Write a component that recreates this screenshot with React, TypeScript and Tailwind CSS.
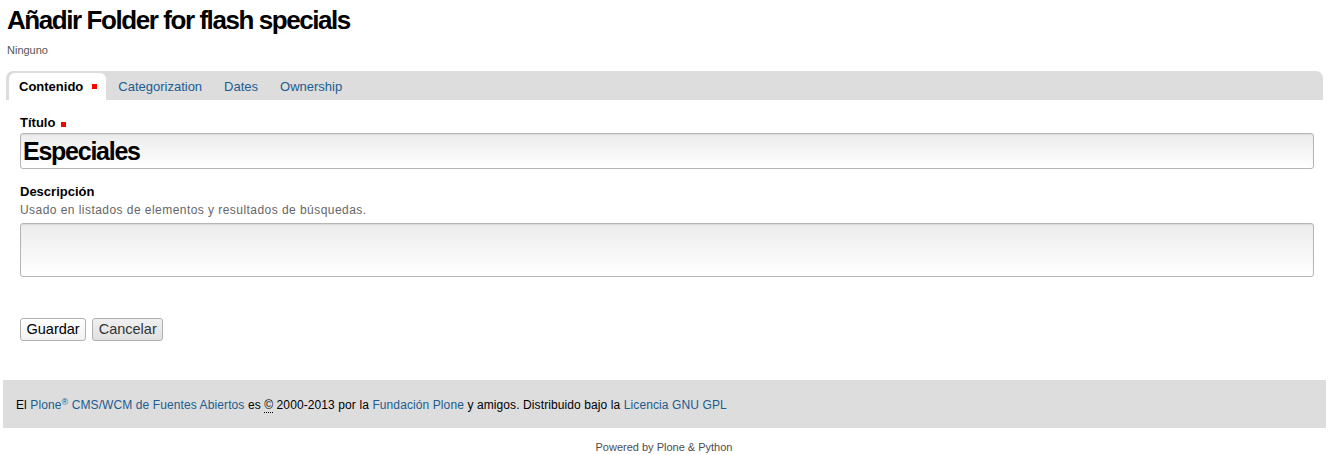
import React from "react";

const tabs = ["Categorization", "Dates", "Ownership"];

function Required({ gap }: { gap: string }) {
  return <span className={`inline-block w-[5px] h-[5px] bg-[#ff0000] align-baseline ${gap}`} />;
}

export default function App() {
  return (
    <div className="min-h-screen bg-white text-black font-['Liberation_Sans',Arial,sans-serif]">
      {/* Page heading */}
      <div className="pl-[7px] pt-[5px]">
        <h1 className="text-[26px] leading-[31px] font-bold tracking-[-0.055em]">
          Añadir Folder for flash specials
        </h1>
        <p className="mt-[7px] text-[11px] leading-[14px] text-[#555]">Ninguno</p>
      </div>

      {/* Edit form */}
      <div className="mt-[14px] ml-[6px] mr-[11px]">
        <div className="h-[29px] bg-[#dddddd] rounded-t-[7px] flex items-end pl-[3px]">
          <div className="h-[27px] bg-white rounded-t-[6px] flex items-center pl-[10px] pr-[9px] text-[13px] font-bold">
            Contenido
            <Required gap="ml-[9px]" />
          </div>
          <div className="flex h-[27px] items-center ml-[1px]">
            {tabs.map((t) => (
              <a key={t} href="#" className="px-[11px] text-[13px] text-[#205c90]">
                {t}
              </a>
            ))}
          </div>
        </div>

        <div className="pl-[14px] pr-[9px]">
          <div className="mt-[15px]">
            <label className="block text-[13px] leading-[16px] font-bold">
              Título
              <Required gap="ml-[6px]" />
            </label>
            <div className="mt-[2px] h-[36px] border border-[#b5b5b5] rounded-[3px] bg-gradient-to-b from-[#ececec] to-white shadow-[inset_0_1px_1px_rgba(0,0,0,0.08)] flex items-center pl-[2px]">
              <span className="text-[25px] font-bold tracking-[-0.05em] leading-none">Especiales</span>
            </div>
          </div>

          <div className="mt-[15px]">
            <label className="block text-[13px] leading-[16px] font-bold">Descripción</label>
            <p className="mt-[3px] text-[12px] leading-[15px] tracking-[0.45px] text-[#666]">
              Usado en listados de elementos y resultados de búsquedas.
            </p>
            <div className="mt-[5px] h-[54px] border border-[#b5b5b5] rounded-[3px] bg-gradient-to-b from-[#ececec] to-white shadow-[inset_0_1px_1px_rgba(0,0,0,0.08)]" />
          </div>

          <div className="mt-[41px] flex gap-[6px]">
            <button className="h-[23px] px-[5.5px] border border-[#b0b0b0] rounded-[3px] bg-gradient-to-b from-white to-[#f1f1f1] text-[14.5px] text-black">
              Guardar
            </button>
            <button className="h-[23px] px-[5.5px] border border-[#b0b0b0] rounded-[3px] bg-gradient-to-b from-[#f0f0f0] to-[#e0e0e0] text-[14.5px] text-[#333]">
              Cancelar
            </button>
          </div>
        </div>
      </div>

      {/* Footer */}
      <div className="mt-[39px] ml-[3px] mr-[8px] h-[48px] bg-[#dddddd] flex items-center pl-[13px] pt-[2px] text-[12px] tracking-[0.1px] text-black">
        <span>
          El <a href="#" className="text-[#205c90]">Plone<sup className="text-[9px]">®</sup> CMS/WCM de Fuentes Abiertos</a> es{" "}
          <abbr title="Copyright" className="no-underline border-b border-dotted border-black">©</abbr> 2000-2013 por la{" "}
          <a href="#" className="text-[#205c90]">Fundación Plone</a> y amigos. Distribuido bajo la{" "}
          <a href="#" className="text-[#205c90]">Licencia GNU GPL</a>
        </span>
      </div>
      <p className="mt-[11px] text-center text-[11px] text-[#4d4d4d] pr-[6px]">Powered by Plone &amp; Python</p>
    </div>
  );
}
